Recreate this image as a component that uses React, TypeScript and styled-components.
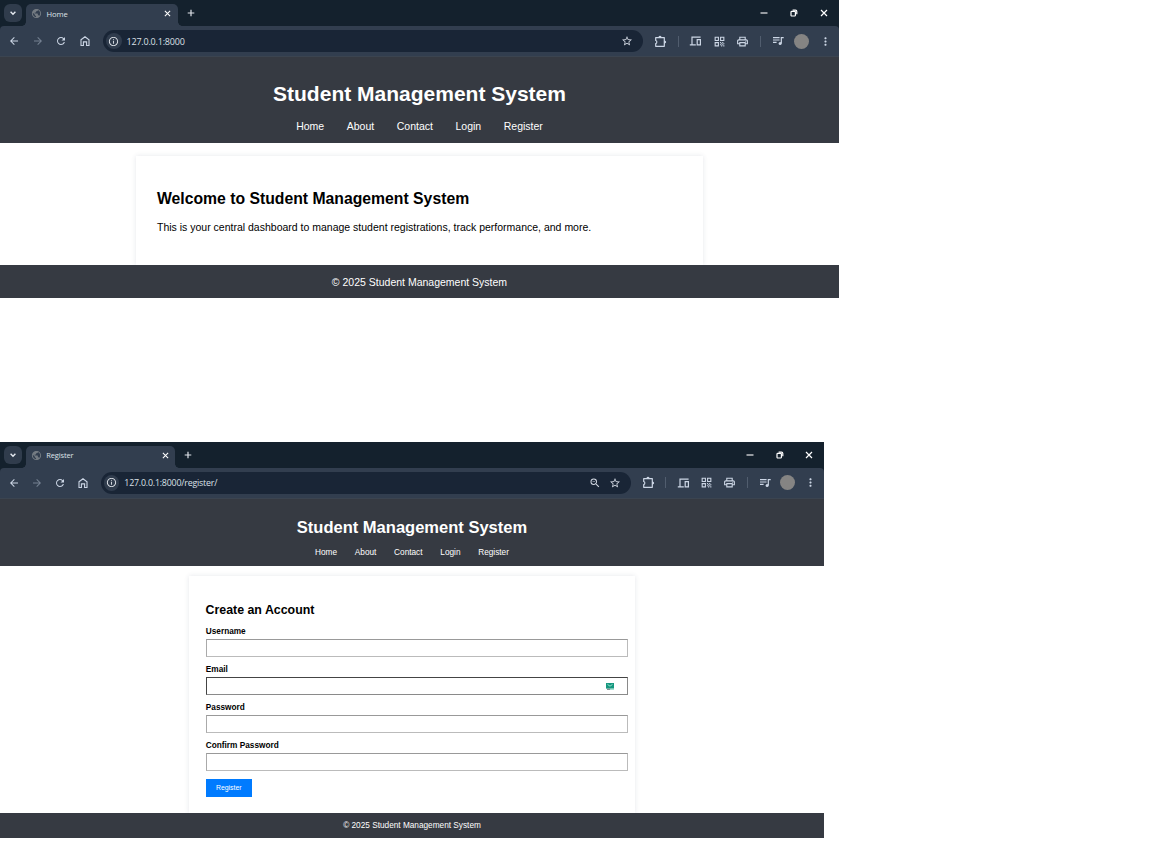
import React from 'react';
import styled, { createGlobalStyle } from 'styled-components';
import {
  MdArrowBack,
  MdArrowForward,
  MdRefresh,
  MdInfoOutline,
  MdStarBorder,
  MdQrCode,
  MdOutlinePrint,
  MdMoreVert,
  MdZoomOut,
  MdPublic,
} from 'react-icons/md';

const GlobalStyle = createGlobalStyle`
  * { box-sizing: border-box; }
  body { margin: 0; background: #fff; overflow: hidden; }
`;

const Screens = styled.main`
  display: flex;
  flex-direction: column;
  align-items: flex-start;
  gap: 143.5px;
`;

const BrowserWindow = styled.section<{ $width: number }>`
  width: ${(p) => p.$width}px;
  display: flex;
  flex-direction: column;
`;

/* ---------- browser chrome, sized in em from one unit ---------- */

const Chrome = styled.div<{ $unit: number }>`
  font: ${(p) => p.$unit}px 'Open Sans', 'Noto Sans', sans-serif;
  background: #14212d;
  color: #dfe3e9;
  height: 57px;
  display: flex;
  flex-direction: column;
  svg { display: block; }
`;

const TabStrip = styled.div`
  height: 26px;
  padding-left: 4px;
  display: flex;
  align-items: flex-start;
`;

const TabSearch = styled.div`
  width: 18px;
  height: 18px;
  margin: 4px 4px 0 0;
  border-radius: 6px;
  background: #303c4c;
  display: grid;
  place-items: center;
`;

const Tab = styled.div`
  position: relative;
  width: 15.2em;
  height: 22px;
  margin-top: 4px;
  padding: 0 0.7em 3px 0.5em;
  border-radius: 5px 5px 0 0;
  background: #323e4f;
  display: flex;
  align-items: center;
  &::before, &::after {
    content: '';
    position: absolute;
    bottom: 0;
    width: 4px;
    height: 4px;
  }
  &::before {
    right: 100%;
    background: radial-gradient(circle at 0 0, transparent 3.5px, #323e4f 4px);
  }
  &::after {
    left: 100%;
    background: radial-gradient(circle at 100% 0, transparent 3.5px, #323e4f 4px);
  }
`;

const Favicon = styled.span`
  color: #747b82;
  width: 1.55em;
`;

const TabTitle = styled.span`
  flex: 1;
  font-size: 0.76em;
  line-height: 12px;
  letter-spacing: -0.1px;
`;

const NewTab = styled.div`
  width: 2.6em;
  height: 26px;
  display: grid;
  place-items: center;
`;

const WindowControls = styled.div`
  margin-left: auto;
  display: flex;
`;

const WindowControl = styled.div`
  width: 3em;
  height: 26px;
  display: grid;
  place-items: center;
  color: #fff;
`;

const Toolbar = styled.div`
  height: 31px;
  padding: 0 0.18em 0 0.25em;
  border-radius: 4px 4px 0 0;
  border-bottom: 1px solid #3b4450;
  background: #323e4f;
  display: flex;
  align-items: center;
`;

const ToolSlot = styled.div<{ $dim?: boolean }>`
  flex: none;
  width: 2.35em;
  display: grid;
  place-items: center;
  color: ${(p) => (p.$dim ? '#748091' : '#ccd6e5')};
`;

const Divider = styled.div`
  flex: none;
  width: 1px;
  height: 11px;
  margin: 0 0.55em;
  background: #515d6e;
`;

const Omnibox = styled.div`
  flex: 1;
  height: 22px;
  margin: 0 0.6em 0 0.6em;
  padding: 0 0.55em 0 0.3em;
  border-radius: 11px;
  background: #192536;
  display: flex;
  align-items: center;
`;

const SiteInfo = styled.span`
  width: 1.6em;
  height: 1.6em;
  border-radius: 50%;
  background: #303c4d;
  display: grid;
  place-items: center;
  margin-right: 0.5em;
`;

const Url = styled.span`
  flex: 1;
  font-size: 0.9em;
  line-height: 14px;
  letter-spacing: -0.2px;
  padding-top: 1px;
  color: #dbe0e7;
`;

const OmniAction = styled.span`
  width: 2.1em;
  display: grid;
  place-items: center;
  color: #d3d9e3;
`;

const Avatar = styled.span`
  width: 15px;
  height: 15px;
  border-radius: 50%;
  background: #858483;
`;

/* ---------- web page, sized in em from the page zoom ---------- */

const Page = styled.div<{ $size: number }>`
  font: ${(p) => p.$size}px/1.15 'Liberation Sans', Arial, sans-serif;
  color: #000;
`;

const SiteHeader = styled.header<{ $height: number }>`
  height: ${(p) => p.$height}px;
  padding: 1em;
  background: #363a42;
  color: #fff;
  text-align: center;
`;

const SiteTitle = styled.h1`
  margin: 0.67em 0;
  font-size: 2em;
  line-height: 1.15;
`;

const Nav = styled.nav`
  display: flex;
  justify-content: center;
  gap: 2.15em;
`;

const NavLink = styled.a`
  color: #fff;
  text-decoration: none;
`;

const Body = styled.div<{ $height: number; $offset: number }>`
  height: ${(p) => p.$height}px;
  padding-top: ${(p) => p.$offset}px;
  overflow: hidden;
`;

const Card = styled.article`
  width: 54em;
  height: 100%;
  margin: 0 auto;
  padding: 2em 2em 0;
  background: #fff;
  box-shadow: 0 0 5px rgba(40, 60, 90, 0.12);
`;

const Heading = styled.h2`
  margin: 0.83em 0;
  font-size: 1.5em;
  line-height: 1.15;
`;

const Paragraph = styled.p`
  margin: 0;
`;

const Form = styled.form`
  display: flex;
  flex-direction: column;
  align-items: flex-start;
  padding-left: 0.3px;
`;

const Label = styled.label`
  font-weight: bold;
  line-height: 9.5px;
  margin-bottom: 2.65px;
`;

const Field = styled.div<{ $active?: boolean }>`
  width: calc(100% + 9.6px);
  height: 18px;
  margin-bottom: 7.75px;
  padding-right: 13px;
  border: 1px solid;
  border-color: ${(p) => (p.$active ? '#444 #8a8a8a #8a8a8a #444' : '#999 #bbb #bbb #aaa')};
  display: flex;
  align-items: center;
`;

const TextInput = styled.input`
  flex: 1;
  min-width: 0;
  border: 0;
  padding: 0 4px;
  outline: none;
  background: transparent;
  font: inherit;
`;

const SubmitButton = styled.button`
  width: 46px;
  height: 18px;
  padding: 0;
  border: 0;
  background: #007bff;
  color: #fff;
  font: 6.9px 'Liberation Sans', Arial, sans-serif;
`;

const SiteFooter = styled.footer<{ $height: number }>`
  height: ${(p) => p.$height}px;
  background: #363a42;
  color: #fff;
  display: flex;
  align-items: center;
  justify-content: center;
`;

/* ---------- drawings ---------- */

const HomeIcon = () => (
  <svg width="12" height="12" viewBox="0 0 12 12" fill="none" stroke="currentColor" strokeWidth="1.1">
    <path d="M2 4.8 6 1.7l4 3.1v5.7H7.6V6.9H4.4v3.6H2z" />
  </svg>
);

const PuzzleIcon = () => (
  <svg width="13" height="13" viewBox="0 0 13 13" fill="none" stroke="currentColor" strokeWidth="1.2" strokeLinejoin="round">
    <path d="M1.7 2.6h8.6v8.7H1.7V8.6c1.5-.3 1.5-2.9 0-3.2z" />
    <path d="M4.9 2.3q1.1-1.9 2.2 0zM10.6 5.9q1.9 1.1 0 2.2z" fill="currentColor" />
  </svg>
);

const DevicesIcon = () => (
  <svg width="13" height="12" viewBox="0 0 13 12" fill="none" stroke="currentColor" strokeWidth="1.2">
    <path d="M11.6 2.2H3v7.2M.8 9.8h6M8.2 4.7h3.2v5.1H8.2z" />
  </svg>
);

const PlaylistIcon = () => (
  <svg width="12" height="12" viewBox="0 0 12 12" fill="none" stroke="currentColor" strokeWidth="1.2">
    <path d="M1 2.6h6.6M1 5h6.6M1 7.4h3.6M9.3 8.4V2.6h2.4" />
    <circle cx="8.1" cy="8.5" r="1.5" fill="currentColor" stroke="none" />
  </svg>
);

const ChevronIcon = () => (
  <svg width="8" height="8" viewBox="0 0 8 8" fill="none" stroke="#e6ebf1" strokeWidth="1.4">
    <path d="m1.6 2.8 2.4 2.4 2.4-2.4" />
  </svg>
);

const CrossIcon = ({ size }: { size: number }) => (
  <svg width={size} height={size} viewBox="0 0 8 8" fill="none" stroke="#fff" strokeWidth="1.2">
    <path d="m1 1 6 6m0-6L1 7" />
  </svg>
);

const PlusIcon = () => (
  <svg width="8" height="8" viewBox="0 0 8 8" fill="none" stroke="currentColor" strokeWidth="1.2">
    <path d="M4 .7v6.6M.7 4h6.6" />
  </svg>
);

const MinimizeIcon = () => (
  <svg width="8" height="8" viewBox="0 0 8 8" stroke="currentColor" strokeWidth="1.1">
    <path d="M.5 4h7" />
  </svg>
);

const RestoreIcon = () => (
  <svg width="8" height="8" viewBox="0 0 8 8" fill="none" stroke="currentColor" strokeWidth="1.2">
    <rect x="1" y="2.4" width="4.4" height="4.6" rx="0.8" />
    <path d="M2.6 1.2h2.9q1.3 0 1.3 1.3v2.8" />
  </svg>
);

const MailBadge = () => (
  <svg width="8" height="7" viewBox="0 0 8 7">
    <rect width="8" height="5.6" fill="#15977f" />
    <path d="m1.5 1.4 2.5 1.8 2.5-1.8" fill="none" stroke="#a5e6d4" strokeWidth="0.9" />
    <path d="M1 6.3h3.4" stroke="#66757a" strokeWidth="1" />
    <path d="M4.4 6.3H8" stroke="#8edcc9" strokeWidth="1" />
  </svg>
);

/* ---------- composition ---------- */

const BrowserChrome = ({ unit, title, url, zoomed }: { unit: number; title: string; url: string; zoomed?: boolean }) => (
  <Chrome $unit={unit}>
    <TabStrip>
      <TabSearch><ChevronIcon /></TabSearch>
      <Tab>
        <Favicon><MdPublic size={11} /></Favicon>
        <TabTitle>{title}</TabTitle>
        <CrossIcon size={7} />
      </Tab>
      <NewTab><PlusIcon /></NewTab>
      <WindowControls>
        <WindowControl><MinimizeIcon /></WindowControl>
        <WindowControl><RestoreIcon /></WindowControl>
        <WindowControl><CrossIcon size={8} /></WindowControl>
      </WindowControls>
    </TabStrip>
    <Toolbar>
      <ToolSlot><MdArrowBack size={12} /></ToolSlot>
      <ToolSlot $dim><MdArrowForward size={12} /></ToolSlot>
      <ToolSlot><MdRefresh size={12} /></ToolSlot>
      <ToolSlot><HomeIcon /></ToolSlot>
      <Omnibox>
        <SiteInfo><MdInfoOutline size={11} /></SiteInfo>
        <Url>{url}</Url>
        {zoomed && <OmniAction><MdZoomOut size={12} /></OmniAction>}
        <OmniAction><MdStarBorder size={12} /></OmniAction>
      </Omnibox>
      <ToolSlot><PuzzleIcon /></ToolSlot>
      <Divider />
      <ToolSlot><DevicesIcon /></ToolSlot>
      <ToolSlot><MdQrCode size={13} /></ToolSlot>
      <ToolSlot><MdOutlinePrint size={13} /></ToolSlot>
      <Divider />
      <ToolSlot><PlaylistIcon /></ToolSlot>
      <ToolSlot><Avatar /></ToolSlot>
      <ToolSlot><MdMoreVert size={13} /></ToolSlot>
    </Toolbar>
  </Chrome>
);

const links = ['Home', 'About', 'Contact', 'Login', 'Register'];
const fields = ['Username', 'Email', 'Password', 'Confirm Password'];

const Banner = ({ height }: { height: number }) => (
  <SiteHeader $height={height}>
    <SiteTitle>Student Management System</SiteTitle>
    <Nav>{links.map((l) => <NavLink key={l}>{l}</NavLink>)}</Nav>
  </SiteHeader>
);

export default function App() {
  return (
    <>
      <GlobalStyle />
      <Screens>
        <BrowserWindow $width={839}>
          <BrowserChrome unit={10} title="Home" url="127.0.0.1:8000" />
          <Page $size={10.5}>
            <Banner height={85.5} />
            <Body $height={122.8} $offset={13.5}>
              <Card>
                <Heading>Welcome to Student Management System</Heading>
                <Paragraph>This is your central dashboard to manage student registrations, track performance, and more.</Paragraph>
              </Card>
            </Body>
            <SiteFooter $height={33.2}>© 2025 Student Management System</SiteFooter>
          </Page>
        </BrowserWindow>

        <BrowserWindow $width={824}>
          <BrowserChrome unit={9.83} title="Register" url="127.0.0.1:8000/register/" zoomed />
          <Page $size={8.26}>
            <Banner height={66.7} />
            <Body $height={247.3} $offset={10.1}>
              <Card>
                <Heading>Create an Account</Heading>
                <Form>
                  {fields.map((name) => (
                    <React.Fragment key={name}>
                      <Label>{name}</Label>
                      <Field $active={name === 'Email'}>
                        <TextInput type={name.includes('Password') ? 'password' : 'text'} />
                        {name === 'Email' && <MailBadge />}
                      </Field>
                    </React.Fragment>
                  ))}
                  <SubmitButton type="button">Register</SubmitButton>
                </Form>
              </Card>
            </Body>
            <SiteFooter $height={25}>© 2025 Student Management System</SiteFooter>
          </Page>
        </BrowserWindow>
      </Screens>
    </>
  );
}
